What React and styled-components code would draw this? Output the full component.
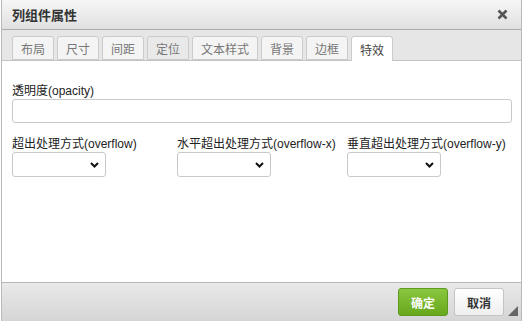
import React from "react";
import styled, { createGlobalStyle } from "styled-components";

const Global = createGlobalStyle`
  html, body { margin: 0; padding: 0; background: #fff; }
  body { font-family: Arial, "Liberation Sans", "Noto Sans CJK SC", sans-serif; }
  * { box-sizing: border-box; }
`;

const Dialog = styled.div`
  margin-left: 1px;
  width: 521px;
  height: 321px;
  border-left: 1px solid #b9b9b9;
  border-right: 1px solid #b9b9b9;
  display: flex;
  flex-direction: column;
  background: #fff;
`;

const TitleBar = styled.div`
  height: 30px;
  flex: none;
  display: flex;
  align-items: center;
  justify-content: space-between;
  padding: 0 13px 0 10px;
  background: linear-gradient(#f6f6f6, #e0e0e0);
  border-bottom: 1px solid #ababab;
`;

const Title = styled.div`
  font: bold 13px "Liberation Sans", "Noto Sans CJK SC", sans-serif;
  color: #333;
`;

const Close = styled.svg`
  width: 11px;
  height: 11px;
  display: block;
`;

const TabBar = styled.div`
  height: 31px;
  flex: none;
  display: flex;
  align-items: flex-end;
  gap: 3px;
  padding-left: 10px;
  background: #e6e6e6;
  border-bottom: 1px solid #c3c3c3;
`;

const Tab = styled.div`
  height: ${(p) => (p.$active ? "25px" : "24px")};
  margin-bottom: ${(p) => (p.$active ? "-1px" : "0")};
  padding: 0 8px;
  display: flex;
  align-items: center;
  justify-content: center;
  border: 1px solid #cbcbcb;
  border-bottom: ${(p) => (p.$active ? "none" : "1px solid #cbcbcb")};
  border-radius: 3px 3px 0 0;
  background: ${(p) => (p.$active ? "#fff" : p.$hover ? "#e9e9e9" : "#f4f4f4")};
  font: 12px "Liberation Sans", "Noto Sans CJK SC", sans-serif;
  color: ${(p) => (p.$active ? "#444" : "#777")};
`;

const Content = styled.div`
  flex: 1;
  padding: 22px 9px 0 10px;
`;

const Label = styled.div`
  font: 12px "Liberation Sans", "Noto Sans CJK SC", sans-serif;
  color: #222;
  line-height: 16px;
  height: 16px;
`;

const TextInput = styled.div`
  height: 24px;
  border: 1px solid #c9c9c9;
  border-radius: 3px;
  background: #fff;
`;

const Row = styled.div`
  margin-top: 13px;
  display: grid;
  grid-template-columns: 165px 170px auto;
`;

const Field = styled.div`
  display: flex;
  flex-direction: column;
`;

const Select = styled.div`
  width: 94px;
  height: 25px;
  border: 1px solid #c9c9c9;
  border-radius: 3px;
  background: #fff;
  display: flex;
  align-items: center;
  justify-content: flex-end;
  padding-right: 6px;
`;

const Chevron = styled.svg`
  width: 9px;
  height: 6px;
  display: block;
`;

const Footer = styled.div`
  height: 39px;
  flex: none;
  border-top: 1px solid #b5b5b5;
  background: linear-gradient(#e9e9e9, #d5d5d5);
  display: flex;
  align-items: center;
  justify-content: flex-end;
  gap: 6px;
  padding: 0 17px 0 0;
  position: relative;
`;

const Button = styled.div`
  width: 50px;
  height: 28px;
  border-radius: 3px;
  display: flex;
  align-items: center;
  justify-content: center;
  font: bold 12px "Liberation Sans", "Noto Sans CJK SC", sans-serif;
  color: ${(p) => (p.$primary ? "#fff" : "#333")};
  border: 1px solid ${(p) => (p.$primary ? "#5e9a1e" : "#c4c4c4")};
  background: ${(p) =>
    p.$primary ? "linear-gradient(#8ac640, #67a81c)" : "linear-gradient(#ffffff, #efefef)"};
`;

const Grip = styled.svg`
  position: absolute;
  right: 3px;
  bottom: 5px;
  width: 10px;
  height: 10px;
`;

const tabs = ["布局", "尺寸", "间距", "定位", "文本样式", "背景", "边框", "特效"];

function ChevronIcon() {
  return (
    <Chevron viewBox="0 0 9 6">
      <path d="M1 1 L4.5 4.5 L8 1" fill="none" stroke="#111" strokeWidth="2" />
    </Chevron>
  );
}

export default function App() {
  return (
    <>
      <Global />
      <Dialog>
        <TitleBar>
          <Title>列组件属性</Title>
          <Close viewBox="0 0 11 11">
            <path d="M1.5 1.5 L9.5 9.5 M9.5 1.5 L1.5 9.5" stroke="#555" strokeWidth="2.6" />
          </Close>
        </TitleBar>
        <TabBar>
          {tabs.map((t, i) => (
            <Tab key={t} $active={i === 7} $hover={i === 3}>
              {t}
            </Tab>
          ))}
        </TabBar>
        <Content>
          <Label>透明度(opacity)</Label>
          <TextInput />
          <Row>
            <Field>
              <Label>超出处理方式(overflow)</Label>
              <Select>
                <ChevronIcon />
              </Select>
            </Field>
            <Field>
              <Label>水平超出处理方式(overflow-x)</Label>
              <Select>
                <ChevronIcon />
              </Select>
            </Field>
            <Field>
              <Label>垂直超出处理方式(overflow-y)</Label>
              <Select>
                <ChevronIcon />
              </Select>
            </Field>
          </Row>
        </Content>
        <Footer>
          <Button $primary>确定</Button>
          <Button>取消</Button>
          <Grip viewBox="0 0 10 10">
            <path d="M10 0 L10 10 L0 10 Z" fill="#666" />
          </Grip>
        </Footer>
      </Dialog>
    </>
  );
}
